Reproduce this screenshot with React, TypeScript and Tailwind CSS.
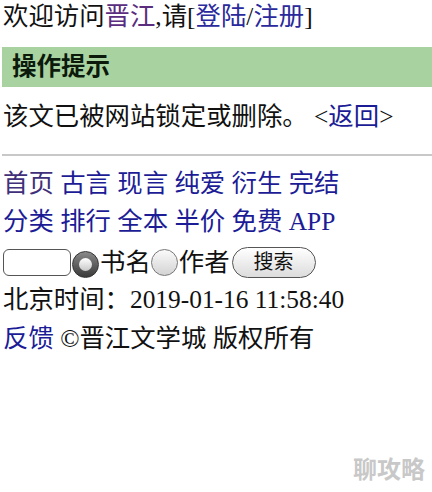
import React from 'react';

const FONT = { fontFamily: '"Liberation Serif", "Noto Sans CJK SC", serif' };

const NAV_ROW_1 = [
  { label: '首页', visited: true },
  { label: '古言' },
  { label: '现言' },
  { label: '纯爱' },
  { label: '衍生' },
  { label: '完结' },
];

const NAV_ROW_2 = [
  { label: '分类' },
  { label: '排行' },
  { label: '全本' },
  { label: '半价' },
  { label: '免费' },
  { label: 'APP' },
];

type NavItem = { label: string; visited?: boolean };

function NavRow({ items }: { items: NavItem[] }) {
  return (
    <div className="h-[38px] leading-[38px] whitespace-nowrap">
      {items.map((item, i) => (
        <React.Fragment key={item.label}>
          {i > 0 && ' '}
          <a className={item.visited ? 'text-[#40307a]' : 'text-[#1c1c96]'}>{item.label}</a>
        </React.Fragment>
      ))}
    </div>
  );
}

function Radio({ checked }: { checked?: boolean }) {
  return checked ? (
    <span className="inline-flex h-[27px] w-[27px] items-center justify-center rounded-full bg-gradient-to-b from-[#8a8a8a] to-[#3a3a3a] border border-[#333]">
      <span className="h-[13px] w-[13px] rounded-full bg-gradient-to-b from-[#ffffff] to-[#c8c8c8]" />
    </span>
  ) : (
    <span className="inline-block h-[27px] w-[27px] rounded-full bg-gradient-to-b from-[#fafafa] to-[#d4d4d4] border-[1.5px] border-[#777]" />
  );
}

export default function App() {
  return (
    <div className="w-[432px] h-[492px] bg-white text-[25.4px] text-[#111] overflow-hidden relative" style={FONT}>
      {/* Header */}
      <div className="pl-[3px] h-[34px] leading-[32px] whitespace-nowrap">
        欢迎访问<a className="text-[#5a2d7e]">晋江</a>,请[<a className="text-[#2a2a9c]">登陆</a>/<a className="text-[#2a2a9c]">注册</a>]
      </div>

      {/* Notice */}
      <div className="ml-[2px] mt-[13px] h-[40px] bg-[#a8d3a0] pl-[10px] leading-[40px] font-bold text-[#0c1a0c] text-[24.5px]">
        操作提示
      </div>
      <div className="pl-[3px] h-[40px] leading-[58px] whitespace-nowrap">
        该文已被网站锁定或删除。 &lt;<a className="text-[#1c1c96]">返回</a>&gt;
      </div>

      <div className="ml-[2px] mt-[27px] h-[2px] bg-[#c8c8c8]" />

      <div className="pl-[3px] mt-[8px]">
        <NavRow items={NAV_ROW_1} />
        <NavRow items={NAV_ROW_2} />

        {/* Search */}
        <div className="h-[42px] flex items-center whitespace-nowrap pt-[2px]">
          <span className="inline-block h-[27px] w-[68px] rounded-[6px] border-[1.5px] border-[#555] bg-white" />
          <span className="ml-[1px]"><Radio checked /></span>
          <span className="ml-[1px]">书名</span>
          <Radio />
          <span className="ml-[1px]">作者</span>
          <button className="ml-[2px] h-[31px] w-[84px] rounded-full border-[1.5px] border-[#555] bg-gradient-to-b from-[#ffffff] to-[#dcdcdc] text-[20px] leading-[27px] text-[#111]">
            搜索
          </button>
        </div>

        <div className="h-[38px] leading-[34px] whitespace-nowrap">北京时间：2019-01-16 11:58:40</div>
        <div className="h-[38px] leading-[36px] whitespace-nowrap">
          <a className="text-[#1c1c96]">反馈</a> ©晋江文学城 版权所有
        </div>
      </div>

      {/* Watermark */}
      <div
        className="absolute right-[7px] bottom-[6px] text-[24px] font-bold text-[#c8c8c8]"
        style={{ fontFamily: '"Noto Sans CJK SC", sans-serif' }}
      >
        聊攻略
      </div>
    </div>
  );
}
